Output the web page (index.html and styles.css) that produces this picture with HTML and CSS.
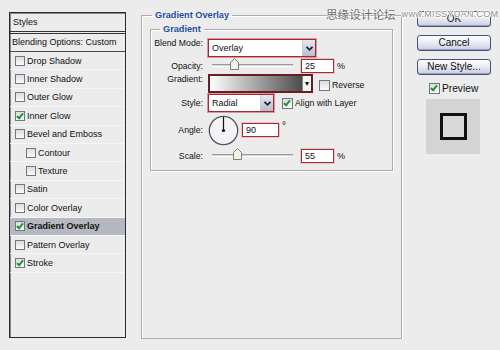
FILE: index.html
```html
<!DOCTYPE html>
<html>
<head>
	<title>Layer Style</title>
	<link rel="stylesheet" href="styles.css">
</head>
<body>
	<div class="dialog">
		<!-- liste des effets -->
		<div class="styles">
			<div class="styles-head">Styles</div>
			<div class="styles-blend">Blending Options: Custom</div>
			<ul class="fx">
				<li><span class="cb"></span>Drop Shadow</li>
				<li><span class="cb"></span>Inner Shadow</li>
				<li><span class="cb"></span>Outer Glow</li>
				<li><span class="cb on"></span>Inner Glow</li>
				<li><span class="cb"></span>Bevel and Emboss</li>
				<li class="sub"><span class="cb"></span>Contour</li>
				<li class="sub"><span class="cb"></span>Texture</li>
				<li><span class="cb"></span>Satin</li>
				<li><span class="cb"></span>Color Overlay</li>
				<li class="active"><span class="cb on"></span>Gradient Overlay</li>
				<li><span class="cb"></span>Pattern Overlay</li>
				<li><span class="cb on"></span>Stroke</li>
			</ul>
		</div>

		<!-- panneau central -->
		<div class="main">
			<fieldset class="grp outer">
				<legend>Gradient Overlay</legend>
				<fieldset class="grp inner">
					<legend>Gradient</legend>

					<div class="row r-blend">
						<span class="lbl">Blend Mode:</span>
						<div class="ctl">
							<div class="select w-blend">
								<span class="val">Overlay</span>
								<span class="arrow"><svg width="9" height="7" viewBox="0 0 9 7"><path d="M1.5 1.8 L4.5 4.8 L7.5 1.8" fill="none" stroke="#222" stroke-width="1.8"/></svg></span>
							</div>
						</div>
					</div>

					<div class="row r-opacity">
						<span class="lbl">Opacity:</span>
						<div class="ctl">
							<div class="track">
								<svg class="thumb" style="left:18px" width="9" height="12" viewBox="0 0 9 12"><path d="M0.5 4.5 L4.5 0.5 L8.5 4.5 V11.5 H0.5 Z" fill="#eef3e6" stroke="#7b7f7a"/></svg>
							</div>
							<span class="num">25</span>
							<span class="unit">%</span>
						</div>
					</div>

					<div class="row r-gradient">
						<span class="lbl">Gradient:</span>
						<div class="ctl">
							<div class="grad">
								<span class="grad-fill"></span>
								<span class="grad-arrow">&#9662;</span>
							</div>
							<span class="cb rev"></span><span class="opt">Reverse</span>
						</div>
					</div>

					<div class="row r-style">
						<span class="lbl">Style:</span>
						<div class="ctl">
							<div class="select w-style">
								<span class="val">Radial</span>
								<span class="arrow"><svg width="9" height="7" viewBox="0 0 9 7"><path d="M1.5 1.8 L4.5 4.8 L7.5 1.8" fill="none" stroke="#222" stroke-width="1.8"/></svg></span>
							</div>
							<span class="cb on align"></span><span class="opt">Align with Layer</span>
						</div>
					</div>

					<div class="row r-angle">
						<span class="lbl">Angle:</span>
						<div class="ctl">
							<svg class="dial" width="31" height="31" viewBox="0 0 31 31">
								<circle cx="15.5" cy="15.5" r="14.2" fill="#f3f3f3" stroke="#4e5566" stroke-width="1.3"/>
								<line x1="15.5" y1="15.5" x2="15.5" y2="2" stroke="#111" stroke-width="1.2"/>
								<circle cx="15.5" cy="15.5" r="1.6" fill="#111"/>
							</svg>
							<span class="num w-angle">90</span>
							<span class="deg">&deg;</span>
						</div>
					</div>

					<div class="row r-scale">
						<span class="lbl">Scale:</span>
						<div class="ctl">
							<div class="track">
								<svg class="thumb" style="left:21px" width="9" height="12" viewBox="0 0 9 12"><path d="M0.5 4.5 L4.5 0.5 L8.5 4.5 V11.5 H0.5 Z" fill="#eef3e6" stroke="#7b7f7a"/></svg>
							</div>
							<span class="num">55</span>
							<span class="unit">%</span>
						</div>
					</div>
				</fieldset>
			</fieldset>
		</div>

		<!-- boutons -->
		<div class="side">
			<div class="btn">OK</div>
			<div class="btn">Cancel</div>
			<div class="btn">New Style...</div>
			<div class="preview-row"><span class="cb on"></span><span>Preview</span></div>
			<div class="swatch"><span class="swatch-sq"></span></div>
		</div>
	</div>

	<div class="mark">
		<span class="mark-cn">思缘设计论坛</span>
		<span class="mark-en">www.MISSYUAN.COM</span>
	</div>
</body>
</html>
```

FILE: styles.css
```css
body {
	margin: 0;
	background: #ececec;
	font-family: "Liberation Sans", Arial, sans-serif;
	color: #111;
}
.dialog {
	display: flex;
	align-items: flex-start;
	padding-left: 9px;
}

/* ---- liste Styles ---- */
.styles {
	margin-top: 12px;
	width: 115px;
	height: 324px;
	border: 1px solid #2b2b2b;
	box-shadow: inset 1px 1px 0 #8a8a8a;
	font-size: 9px;
}
.styles-head {
	height: 18px;
	line-height: 18px;
	padding-left: 3px;
	border-bottom: 3px double #333;
}
.styles-blend {
	height: 17px;
	line-height: 17px;
	padding-left: 2px;
	border-bottom: 1px solid #4a4a4a;
}
.fx { list-style: none; margin: 0; padding: 0; }
.fx li {
	height: 17.4px;
	border-bottom: 1px solid #f6f6f6;
	display: flex;
	align-items: center;
	padding-left: 5px;
}
.fx li.sub { padding-left: 16px; }
.fx li.active { background: #b5b7c1; font-weight: bold; }

/* case a cocher */
.cb {
	position: relative;
	display: inline-block;
	flex: none;
	width: 8px;
	height: 8px;
	border: 1px solid #6c7888;
	background: linear-gradient(#dcdcdc, #fbfbfb);
	margin-right: 2px;
}
.cb.on::after {
	content: "";
	position: absolute;
	left: 2px;
	top: 0px;
	width: 2px;
	height: 5px;
	border-right: 2px solid #1f9a2a;
	border-bottom: 2px solid #1f9a2a;
	transform: rotate(40deg);
}

/* ---- panneau central ---- */
.main {
	margin-left: 15px;
	width: 261px;
}
.grp {
	margin: 0;
	min-width: 0;
	border: 1px solid #acacac;
	box-shadow: inset 1px 1px 0 #fff, 1px 1px 0 #fff;
}
.grp > legend {
	font-size: 9.2px;
	font-weight: bold;
	color: #1d4f9e;
	line-height: 14px;
	padding: 0 3px;
}
.outer {
	margin-top: 8px;
	height: 331px;
	box-sizing: border-box;
	padding: 0 8px;
}
.outer > legend { margin-left: 2px; }
.inner {
	padding: 2px 0 5px 0;
}
.inner > legend { margin-left: 9px; }

.row {
	display: grid;
	grid-template-columns: 52px auto;
	column-gap: 5px;
	align-items: center;
	font-size: 8.7px;
}
.lbl { text-align: right; }
.ctl { display: flex; align-items: center; }
.r-blend { height: 19px; align-items: start; }
.r-opacity { height: 17px; }
.r-gradient { height: 19px; align-items: start; }
.r-style { height: 20px; }
.r-angle { height: 33px; }
.r-scale { height: 19px; }

.select {
	display: flex;
	height: 16px;
	background: #fff;
	border: 1px solid #a52a35;
	box-shadow: 0 0 0 1px rgba(190, 50, 60, 0.45);
	box-sizing: content-box;
}
.w-blend { width: 106px; margin-top: 1px; }
.w-style { width: 64px; }
.select .val { flex: 1; padding-left: 3px; line-height: 16px; font-size: 9px; }
.select .arrow {
	width: 12px;
	display: flex;
	align-items: center;
	justify-content: center;
	background: linear-gradient(#e6e9f2, #b7bdcd);
	border-left: 1px solid #c9ccd6;
}

.track {
	position: relative;
	margin-left: 4px;
	width: 81px;
	height: 1px;
	background: #d6d6d6;
	border-top: 1px solid #9a9a9a;
	border-bottom: 1px solid #fff;
}
.thumb { position: absolute; top: -7px; }

.num {
	display: inline-block;
	width: 28px;
	height: 12px;
	line-height: 12px;
	padding-left: 3px;
	background: #fff;
	border: 1px solid #a52a35;
	box-shadow: 0 0 0 0.5px rgba(190, 50, 60, 0.4);
	font-size: 9px;
}
.r-opacity .num, .r-scale .num { margin-left: 8px; }
.unit { margin-left: 3px; font-size: 9px; }

.grad {
	display: flex;
	width: 101px;
	height: 15px;
	border: 2px solid #6a1c22;
}
.grad-fill { flex: 1; background: linear-gradient(to right, #fff, #4c4c4c); }
.grad-arrow {
	width: 8px;
	background: #f4f4f4;
	border-left: 1px solid #888;
	font-size: 8px;
	line-height: 15px;
	text-align: center;
}
.rev { margin-left: 6px; margin-top: 3px; width: 9px; height: 9px; }
.r-gradient .opt { margin-top: 3px; }
.align { margin-left: 8px; width: 9px; height: 9px; }

.dial { margin-top: 1px; }
.w-angle { width: 32px; margin-left: 3px; }
.deg { align-self: flex-start; margin: 6px 0 0 3px; font-size: 10px; }

/* ---- colonne droite ---- */
.side {
	margin-left: 15px;
	margin-top: 11px;
	width: 74px;
	display: flex;
	flex-direction: column;
	gap: 8px;
	font-size: 10px;
}
.btn {
	height: 14px;
	line-height: 14px;
	text-align: center;
	border: 1px solid #445478;
	border-radius: 3px;
	background: linear-gradient(#ffffff, #e6e8f0 55%, #c8cde0);
	box-shadow: inset 0 -1px 0 #9aa3c0;
}
.preview-row {
	display: flex;
	align-items: center;
	margin: -2px 0 0 12px;
	height: 14px;
	font-size: 10.2px;
}
.preview-row .cb { width: 9px; height: 9px; margin-right: 2px; }
.swatch {
	margin: -4px 0 0 9px;
	width: 54px;
	height: 55px;
	background: #d4d4d4;
	display: flex;
	align-items: center;
	justify-content: center;
}
.swatch-sq {
	width: 21px;
	height: 21px;
	border: 3px solid #111;
	background: #d9d9d9;
}

/* filigrane */
.mark {
	position: absolute;
	top: 6px;
	left: 326px;
	display: flex;
	align-items: center;
	gap: 6px;
}
.mark-cn {
	font-family: "Noto Sans CJK SC", sans-serif;
	font-size: 11.6px;
	color: #6a6a6a;
	text-shadow: 0 0 2px #fff, 0 0 2px #fff;
}
.mark-en {
	font-size: 9px;
	letter-spacing: 0.3px;
	color: #8e8e8e;
	text-shadow: 1px 0 0 #fff, -1px 0 0 #fff, 0 1px 0 #fff, 0 -1px 0 #fff;
}
```
